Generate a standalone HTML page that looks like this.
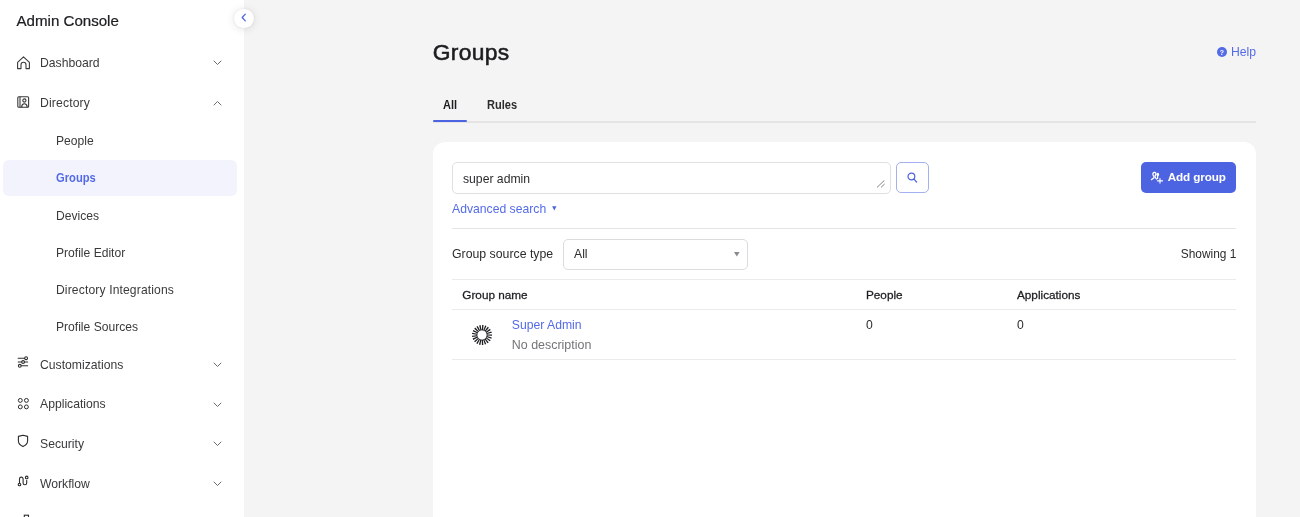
<!DOCTYPE html>
<html lang="en">
<head>
<meta charset="utf-8">
<title>Groups - Admin Console</title>
<style>
*{box-sizing:border-box;margin:0;padding:0}
html,body{width:1300px;height:517px;overflow:hidden;background:#f4f4f4;font-family:"Liberation Sans",sans-serif;color:#272727}
body{position:relative;will-change:transform}
.abs{position:absolute;white-space:nowrap}
#side{position:absolute;left:0;top:0;width:243.5px;height:517px;background:#fff}
.brand{left:16.5px;top:11px;font-size:15.1px;line-height:20px;color:#1d1d21;-webkit-text-stroke:0.22px #1d1d21}
.nav{left:40px;font-size:12.2px;line-height:16px;color:#3a3a3c;margin-top:1px}
.sub{left:56px;font-size:12.1px;line-height:16px;color:#3a3a3c;margin-top:1px}
.sel{position:absolute;left:3px;top:159.6px;width:234px;height:36.8px;border-radius:6px;background:#f2f3fd}
.ico{position:absolute}
.chev{position:absolute;left:213px;margin-top:1px}
#collapse{position:absolute;left:233.9px;top:8.6px;width:19.8px;height:19.8px;border-radius:50%;background:#fff;box-shadow:0 1px 10px rgba(0,0,0,.11),0 0 3px rgba(0,0,0,.07)}
h1{position:absolute;left:432.8px;top:38px;font-size:22.8px;line-height:28px;font-weight:normal;letter-spacing:0.34px;color:#1d1d21;-webkit-text-stroke:0.55px #1d1d21}
.blue{color:#546be7}
#card{position:absolute;left:433px;top:142px;width:823px;height:400px;background:#fff;border-radius:12px}
.hr{position:absolute;height:1px;background:#ebebeb}
.t{font-size:12.2px;line-height:16px}
.sb{display:inline-block;transform:scaleX(.92);transform-origin:0 50%}
</style>
</head>
<body>
<div id="side">
  <div class="abs brand">Admin Console</div>

  <svg class="ico" style="left:16px;top:54.6px" width="16" height="16" viewBox="0 0 16 16" fill="none" stroke="#3a3a3c" stroke-width="1.1" stroke-linejoin="round" stroke-linecap="round"><path d="M1.6 7.4 L7.5 1.8 L13.4 7.4 V13.6 H10 V9.8 A2.5 2.5 0 0 0 5 9.8 V13.6 H1.6 Z"/></svg>
  <div class="abs nav" style="top:54px">Dashboard</div>
  <svg class="chev" style="top:59px" width="9" height="6" viewBox="0 0 9 6" fill="none" stroke="#6a6a70" stroke-width="1" stroke-linecap="round" stroke-linejoin="round"><path d="M1 1 L4.5 4.5 L8 1"/></svg>

  <svg class="ico" style="left:16px;top:94px" width="16" height="16" viewBox="0 0 16 16" fill="none" stroke="#3a3a3c" stroke-width="1.1" stroke-linejoin="round" stroke-linecap="round"><rect x="1.8" y="2.8" width="10.8" height="10.4" rx="1"/><path d="M4 3 V13"/><circle cx="8.4" cy="6.5" r="1.6"/><path d="M5.7 13 A2.7 3.2 0 0 1 11.1 13"/></svg>
  <div class="abs nav" style="top:94px;letter-spacing:0.14px">Directory</div>
  <svg class="chev" style="top:99px" width="9" height="6" viewBox="0 0 9 6" fill="none" stroke="#6a6a70" stroke-width="1" stroke-linecap="round" stroke-linejoin="round"><path d="M1 5 L4.5 1.5 L8 5"/></svg>

  <div class="abs sub" style="top:132px">People</div>
  <div class="sel"></div>
  <div class="abs sub blue" style="top:169px;font-weight:bold;font-size:12.3px"><span class="sb" style="transform:scaleX(.91)">Groups</span></div>
  <div class="abs sub" style="top:207px">Devices</div>
  <div class="abs sub" style="top:244px">Profile Editor</div>
  <div class="abs sub" style="top:281px;letter-spacing:0.14px">Directory Integrations</div>
  <div class="abs sub" style="top:318px">Profile Sources</div>

  <svg class="ico" style="left:16px;top:354px" width="16" height="16" viewBox="0 0 16 16" fill="none" stroke="#2c2c2e" stroke-width="1.1" stroke-linecap="round"><path d="M2.2 4.2 H8.6"/><circle cx="10.1" cy="4.2" r="1.4"/><path d="M2.2 8 H5.6 M8.6 8 H11.6"/><circle cx="7.1" cy="8" r="1.4"/><path d="M5.4 11.8 H11.6"/><circle cx="3.8" cy="11.8" r="1.4"/></svg>
  <div class="abs nav" style="top:356px">Customizations</div>
  <svg class="chev" style="top:361px" width="9" height="6" viewBox="0 0 9 6" fill="none" stroke="#6a6a70" stroke-width="1" stroke-linecap="round" stroke-linejoin="round"><path d="M1 1 L4.5 4.5 L8 1"/></svg>

  <svg class="ico" style="left:16px;top:395px" width="16" height="16" viewBox="0 0 16 16" fill="none" stroke="#2c2c2e" stroke-width="1"><circle cx="4.3" cy="5.4" r="1.95"/><circle cx="10.4" cy="5.4" r="1.95"/><circle cx="4.3" cy="11.9" r="1.95"/><circle cx="10.4" cy="11.9" r="1.95"/></svg>
  <div class="abs nav" style="top:395px">Applications</div>
  <svg class="chev" style="top:401px" width="9" height="6" viewBox="0 0 9 6" fill="none" stroke="#6a6a70" stroke-width="1" stroke-linecap="round" stroke-linejoin="round"><path d="M1 1 L4.5 4.5 L8 1"/></svg>

  <svg class="ico" style="left:16px;top:433.2px" width="16" height="16" viewBox="0 0 16 16" fill="none" stroke="#2c2c2e" stroke-width="1.1" stroke-linejoin="round"><path d="M2.4 3.4 L7 2.2 L11.6 3.4 V8 C11.6 10.6 9.6 12.4 7 13.6 C4.4 12.4 2.4 10.6 2.4 8 Z"/></svg>
  <div class="abs nav" style="top:435px">Security</div>
  <svg class="chev" style="top:440px" width="9" height="6" viewBox="0 0 9 6" fill="none" stroke="#6a6a70" stroke-width="1" stroke-linecap="round" stroke-linejoin="round"><path d="M1 1 L4.5 4.5 L8 1"/></svg>

  <svg class="ico" style="left:16px;top:473px" width="16" height="16" viewBox="0 0 16 16" fill="none" stroke="#2c2c2e" stroke-width="1.1" stroke-linecap="round"><circle cx="3.5" cy="11.5" r="1.3"/><circle cx="10.7" cy="4.4" r="1.3"/><path d="M3.5 10 V5.9 A1.8 1.8 0 0 1 7.1 5.9 V9.9 A1.8 1.8 0 0 0 10.7 9.9 V7.4"/></svg>
  <div class="abs nav" style="top:475px">Workflow</div>
  <svg class="chev" style="top:480px" width="9" height="6" viewBox="0 0 9 6" fill="none" stroke="#6a6a70" stroke-width="1" stroke-linecap="round" stroke-linejoin="round"><path d="M1 1 L4.5 4.5 L8 1"/></svg>

  <svg class="ico" style="left:16px;top:513px" width="16" height="16" viewBox="0 0 16 16" fill="none" stroke="#2c2c2e" stroke-width="1.1"><rect x="8.3" y="2.2" width="4.2" height="10"/></svg>
</div>
<div id="collapse"><svg style="position:absolute;left:7.3px;top:4.7px" width="6" height="9" viewBox="0 0 6 9" fill="none" stroke="#4c64e1" stroke-width="1.25" stroke-linecap="round" stroke-linejoin="round"><path d="M4.3 1.1 L1.2 4.5 L4.3 7.9"/></svg></div>

<h1>Groups</h1>
<svg class="ico" style="left:1217px;top:47px" width="10" height="10" viewBox="0 0 10 10"><circle cx="5" cy="5" r="5" fill="#546be7"/><text x="5" y="7.6" font-size="7" font-weight="bold" text-anchor="middle" fill="#fff" font-family="Liberation Sans, sans-serif">?</text></svg>
<div class="abs t blue" style="left:1231px;top:44px">Help</div>

<div class="abs t" style="left:443px;top:97px;font-size:12px;font-weight:bold;color:#1d1d21"><span class="sb">All</span></div>
<div class="abs t" style="left:487px;top:97px;font-size:12px;font-weight:bold;color:#2c2c2e"><span class="sb">Rules</span></div>
<div class="hr" style="left:433px;top:121.3px;height:1.5px;width:823px;background:#e4e4e4"></div>
<div style="position:absolute;left:432.7px;top:120px;width:34px;height:2.4px;background:#4c64e1;border-radius:1px"></div>

<div id="card"></div>
<div style="position:absolute;left:452px;top:162px;width:439px;height:31.5px;border:1px solid #e0e0e3;border-radius:5px;background:#fff"></div>
<div class="abs t" style="left:463px;top:171px;color:#2c2c2e">super admin</div>
<svg class="ico" style="left:876px;top:180px" width="10" height="8" viewBox="0 0 10 8" stroke="#777" stroke-width="0.9" fill="none"><path d="M1 7.4 L8.4 0.4 M5 7.4 L8.6 4"/></svg>
<div style="position:absolute;left:896px;top:162px;width:33px;height:31px;border:1px solid #a3b0f1;border-radius:5px;background:#fff"></div>
<svg class="ico" style="left:906px;top:171px" width="13" height="13" viewBox="0 0 13 13" fill="none" stroke="#4c64e1" stroke-width="1.2" stroke-linecap="round"><circle cx="5.4" cy="5.5" r="3.4"/><path d="M8 8.2 L10.6 11"/></svg>

<div style="position:absolute;left:1141px;top:162px;width:95.3px;height:31px;border-radius:5px;background:#4c64e1"></div>
<svg class="ico" style="left:1150px;top:171px" width="14" height="13" viewBox="0 0 14 13" fill="none" stroke="#fff" stroke-width="1.3" stroke-linecap="round" stroke-linejoin="round"><path d="M4.5 1.4 C3.1 1.4 2.6 2.6 3 3.9 C3.3 4.9 4.1 5.4 4.1 6.3 C4.1 7.4 2.1 7.6 1.5 8.6"/><path d="M4.5 1.4 C5.4 1.4 5.9 2 5.9 2.7 C5.9 4 5 4.6 5 5.6 C5 6.6 5.8 7.4 6.6 8"/><ellipse cx="7.8" cy="3.6" rx="1.35" ry="1.8" fill="#fff" stroke="none"/><path d="M7.6 5 V7.4" stroke-width="1.2"/><path d="M10 7.5 V12.1 M7.5 9.85 H12.6" stroke-width="1.15"/></svg>
<div class="abs t" style="left:1167.7px;top:169px;color:#fff;font-weight:bold;font-size:11.7px;letter-spacing:-0.1px">Add group</div>

<div class="abs t blue" style="left:452px;top:201px">Advanced search</div>
<svg class="ico" style="left:552.2px;top:206.4px" width="5" height="5" viewBox="0 0 5 5"><path d="M0.1 0.2 H4.5 L2.3 4.5 Z" fill="#4c64e1"/></svg>
<div class="hr" style="left:452px;top:228px;width:784.3px;background:#e4e4e4"></div>

<div class="abs t" style="left:452px;top:246px;font-size:12.3px;color:#2c2c2e">Group source type</div>
<div style="position:absolute;left:563px;top:238.6px;width:185px;height:31px;border:1px solid #dcdcdf;border-radius:5px;background:#fff"></div>
<div class="abs t" style="left:574px;top:246px;color:#2c2c2e">All</div>
<svg class="ico" style="left:734px;top:252.4px" width="6" height="5" viewBox="0 0 6 5"><path d="M0 0 H5.6 L2.8 4.5 Z" fill="#8a8a90"/></svg>
<div class="abs t" style="right:63.7px;top:246px;font-size:11.9px;color:#2c2c2e">Showing 1</div>

<div class="hr" style="left:452px;top:279px;width:784.3px"></div>
<div class="abs" style="left:462.3px;top:287px;font-size:11.75px;line-height:16px;color:#1d1d21;-webkit-text-stroke:0.27px #1d1d21">Group name</div>
<div class="abs" style="left:866px;top:287px;font-size:11.75px;line-height:16px;color:#1d1d21;-webkit-text-stroke:0.27px #1d1d21">People</div>
<div class="abs" style="left:1017px;top:287px;font-size:11.75px;line-height:16px;color:#1d1d21;-webkit-text-stroke:0.27px #1d1d21">Applications</div>
<div class="hr" style="left:452px;top:309px;width:784.3px"></div>

<svg class="ico" style="left:470.9px;top:323.8px" width="22" height="22" viewBox="-11 -11 22 22"><g fill="#1d1d21"><path d="M-0.55 -5 L-0.72 -10 H0.72 L0.55 -5 Z" transform="rotate(5.0)"/><path d="M-0.55 -5 L-0.72 -10 H0.72 L0.55 -5 Z" transform="rotate(22.14)"/><path d="M-0.55 -5 L-0.72 -10 H0.72 L0.55 -5 Z" transform="rotate(39.29)"/><path d="M-0.55 -5 L-0.72 -10 H0.72 L0.55 -5 Z" transform="rotate(56.43)"/><path d="M-0.55 -5 L-0.72 -10 H0.72 L0.55 -5 Z" transform="rotate(73.57)"/><path d="M-0.55 -5 L-0.72 -10 H0.72 L0.55 -5 Z" transform="rotate(90.71)"/><path d="M-0.55 -5 L-0.72 -10 H0.72 L0.55 -5 Z" transform="rotate(107.86)"/><path d="M-0.55 -5 L-0.72 -10 H0.72 L0.55 -5 Z" transform="rotate(125.0)"/><path d="M-0.55 -5 L-0.72 -10 H0.72 L0.55 -5 Z" transform="rotate(142.14)"/><path d="M-0.55 -5 L-0.72 -10 H0.72 L0.55 -5 Z" transform="rotate(159.29)"/><path d="M-0.55 -5 L-0.72 -10 H0.72 L0.55 -5 Z" transform="rotate(176.43)"/><path d="M-0.55 -5 L-0.72 -10 H0.72 L0.55 -5 Z" transform="rotate(193.57)"/><path d="M-0.55 -5 L-0.72 -10 H0.72 L0.55 -5 Z" transform="rotate(210.71)"/><path d="M-0.55 -5 L-0.72 -10 H0.72 L0.55 -5 Z" transform="rotate(227.86)"/><path d="M-0.55 -5 L-0.72 -10 H0.72 L0.55 -5 Z" transform="rotate(245.0)"/><path d="M-0.55 -5 L-0.72 -10 H0.72 L0.55 -5 Z" transform="rotate(262.14)"/><path d="M-0.55 -5 L-0.72 -10 H0.72 L0.55 -5 Z" transform="rotate(279.29)"/><path d="M-0.55 -5 L-0.72 -10 H0.72 L0.55 -5 Z" transform="rotate(296.43)"/><path d="M-0.55 -5 L-0.72 -10 H0.72 L0.55 -5 Z" transform="rotate(313.57)"/><path d="M-0.55 -5 L-0.72 -10 H0.72 L0.55 -5 Z" transform="rotate(330.71)"/><path d="M-0.55 -5 L-0.72 -10 H0.72 L0.55 -5 Z" transform="rotate(347.86)"/></g><circle r="5.1" fill="none" stroke="#1d1d21" stroke-width="0.8"/></svg>
<div class="abs t blue" style="left:511.8px;top:317px">Super Admin</div>
<div class="abs t" style="left:511.8px;top:337px;font-size:12.45px;color:#747478">No description</div>
<div class="abs t" style="left:866px;top:317px;color:#2c2c2e">0</div>
<div class="abs t" style="left:1017px;top:317px;color:#2c2c2e">0</div>
<div class="hr" style="left:452px;top:359px;width:784.3px"></div>
</body>
</html>
